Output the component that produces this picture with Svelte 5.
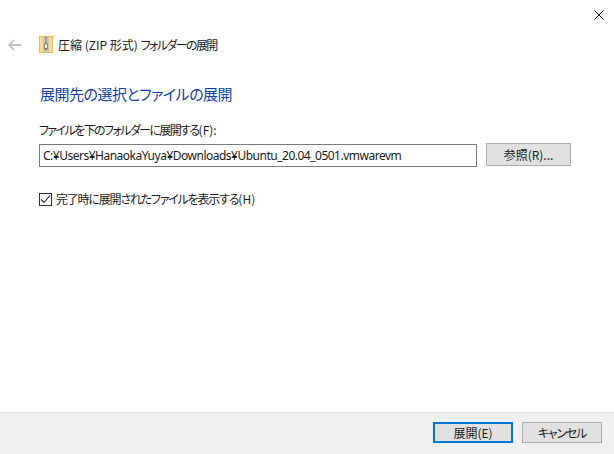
<script>
  let path = 'C:¥Users¥HanaokaYuya¥Downloads¥Ubuntu_20.04_0501.vmwarevm';
  let showFiles = true;
</script>

<div class="dialog">
  <div class="titlebar">
    <svg class="close" width="10" height="10" viewBox="0 0 10 10">
      <path d="M0.5 0.5L9.5 9.5M9.5 0.5L0.5 9.5" stroke="#111" stroke-width="1" fill="none" />
    </svg>
  </div>

  <div class="nav">
    <svg class="back" width="13" height="12" viewBox="0 0 13 12">
      <path d="M6 1L1.2 6L6 11M1.2 6H13" stroke="#c0c0c0" stroke-width="1.8" fill="none" />
    </svg>
    <svg class="zip" width="14" height="17" viewBox="0 0 14 17">
      <rect x="0.5" y="0.5" width="13" height="16" fill="#f8dc8c" stroke="#e3bd50" />
      <rect x="4" y="1" width="6" height="15" fill="#c8c6be" />
      <path d="M7 1V14" stroke="#5f5c55" stroke-width="1.4" stroke-dasharray="1.2 1.2" />
      <rect x="5.6" y="8" width="2.8" height="4.5" fill="#f4f4f4" stroke="#5f5c55" stroke-width="0.7" />
    </svg>
    <span class="title">圧縮 (ZIP 形式) <span class="title-tail">フォルダーの展開</span></span>
  </div>

  <main>
    <h1>展開先の選択とファイルの展開</h1>
    <label class="field-label" for="dest"><span class="label-text">ファイルを下のフォルダーに展開する</span>(F):</label>
    <div class="path-row">
      <input id="dest" type="text" value={path} />
      <button class="browse">参照(R)...</button>
    </div>
    <label class="check">
      <span class="box">
        {#if showFiles}
          <svg width="11" height="11" viewBox="0 0 11 11">
            <path d="M1 5.5L4 8.5L10 1.5" stroke="#222" stroke-width="1.1" fill="none" />
          </svg>
        {/if}
      </span>
      <span><span class="check-text">完了時に展開されたファイルを表示する</span>(H)</span>
    </label>
  </main>

  <footer>
    <button class="primary">展開(E)</button>
    <button class="cancel">キャンセル</button>
  </footer>
</div>

<style>
  :global(body) {
    margin: 0;
    background: #fff;
  }
  .dialog {
    width: 614px;
    height: 454px;
    display: flex;
    flex-direction: column;
    overflow: hidden;
    font-family: "Noto Sans CJK JP", "Noto Sans", sans-serif;
    font-feature-settings: "palt";
    font-size: 12px;
    color: #1a1a1a;
  }
  .titlebar {
    height: 36px;
    display: flex;
    justify-content: flex-end;
    padding: 10px 10px 0 0;
    box-sizing: border-box;
  }
  .close {
    display: block;
  }
  .nav {
    height: 17px;
    display: flex;
    align-items: center;
    padding-left: 8px;
  }
  .zip {
    margin-left: 18px;
  }
  .title {
    margin-left: 5px;
    font-size: 12px;
  }
  .title-tail {
    letter-spacing: -1.6px;
  }
  main {
    flex: 1;
    padding-left: 39px;
  }
  h1 {
    margin: 30px 0 0 1px;
    font-size: 15px;
    line-height: 22px;
    font-weight: 400;
    letter-spacing: -0.5px;
    color: #0f3fa8;
  }
  .field-label {
    display: block;
    margin-top: 17px;
    line-height: 16px;
  }
  .label-text {
    letter-spacing: -1.6px;
  }
  .path-row {
    display: flex;
    align-items: flex-start;
    margin-top: 5px;
    gap: 9px;
  }
  input {
    width: 438px;
    height: 23px;
    box-sizing: border-box;
    border: 1px solid #7a7a7a;
    border-radius: 0;
    padding: 0 3px;
    margin: 1px 0 0;
    font: inherit;
    font-family: "Noto Sans", "Noto Sans CJK JP", sans-serif;
    letter-spacing: -0.5px;
    color: #1a1a1a;
    outline: none;
  }
  button {
    width: 80px;
    height: 21px;
    box-sizing: border-box;
    border: 1px solid #adadad;
    border-radius: 0;
    background: #e1e1e1;
    padding: 0;
    font: inherit;
    color: #1a1a1a;
  }
  .browse {
    width: 85px;
    height: 23px;
  }
  .check {
    display: flex;
    align-items: center;
    gap: 4px;
    margin-top: 24px;
    line-height: 16px;
  }
  .check-text {
    letter-spacing: -1.2px;
  }
  .box {
    width: 13px;
    height: 13px;
    box-sizing: border-box;
    border: 1px solid #333;
    display: flex;
    align-items: center;
    justify-content: center;
  }
  footer {
    height: 42px;
    box-sizing: border-box;
    border-top: 1px solid #dfdfdf;
    background: #f0f0f0;
    display: flex;
    justify-content: flex-end;
    gap: 9px;
    padding: 9px 12px 0 0;
  }
  .primary {
    border: 2px solid #0078d7;
  }
  .cancel {
    letter-spacing: -1.2px;
  }
</style>
